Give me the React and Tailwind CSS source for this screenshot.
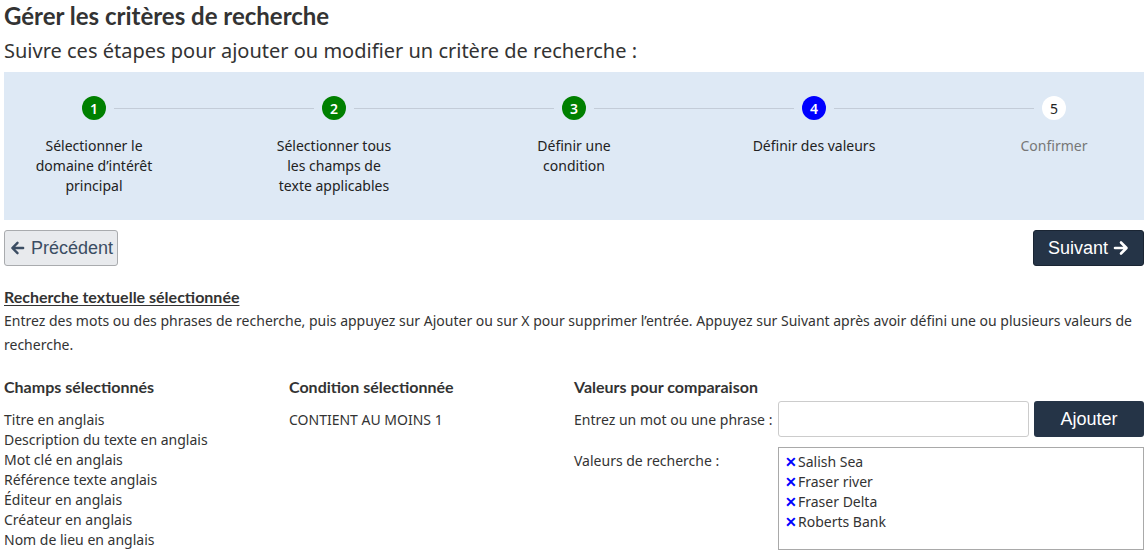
import React from 'react';

const steps = [
  { n: 1, label: 'Sélectionner le domaine d’intérêt principal', state: 'done' },
  { n: 2, label: 'Sélectionner tous les champs de texte applicables', state: 'done' },
  { n: 3, label: 'Définir une condition', state: 'done' },
  { n: 4, label: 'Définir des valeurs', state: 'current' },
  { n: 5, label: 'Confirmer', state: 'todo' },
];

const champs = [
  'Titre en anglais',
  'Description du texte en anglais',
  'Mot clé en anglais',
  'Référence texte anglais',
  'Éditeur en anglais',
  'Créateur en anglais',
  'Nom de lieu en anglais',
];

const valeurs = ['Salish Sea', 'Fraser river', 'Fraser Delta', 'Roberts Bank'];

const ArrowLeft = () => (
  <svg width="15" height="16" viewBox="0 0 16 16" className="shrink-0">
    <path d="M14 8H3M8 2.5L2.5 8L8 13.5" fill="none" stroke="currentColor" strokeWidth="2.6" strokeLinecap="round" strokeLinejoin="round" />
  </svg>
);

const ArrowRight = () => (
  <svg width="16" height="16" viewBox="0 0 16 16" className="shrink-0">
    <path d="M2 8h11M8 2.5L13.5 8L8 13.5" fill="none" stroke="currentColor" strokeWidth="2.6" strokeLinecap="round" strokeLinejoin="round" />
  </svg>
);

const Step = ({ step, first, last }) => {
  const circle =
    step.state === 'done'
      ? 'bg-[#008000] text-white font-semibold'
      : step.state === 'current'
      ? 'bg-[#0000ff] text-white font-semibold'
      : 'bg-white text-[#222]';
  return (
    <div className="w-[240px] shrink-0 flex flex-col items-center">
      <div className="flex items-center w-full h-[24px]">
        <div className={`flex-1 h-px mr-2 ${first ? '' : 'bg-[#c3ccd8]'}`} />
        <div className={`w-6 h-6 rounded-full flex items-center justify-center text-[14px] ${circle}`}>
          {step.n}
        </div>
        <div className={`flex-1 h-px ml-2 ${last ? '' : 'bg-[#c3ccd8]'}`} />
      </div>
      <div
        className={`w-[126px] mt-[16px] text-center text-[14px] leading-5 ${
          step.state === 'todo' ? 'text-[#777]' : 'text-[#222]'
        }`}
      >
        {step.label}
      </div>
    </div>
  );
};

export default function App() {
  return (
    <div className="w-[1148px] h-[555px] overflow-hidden bg-white px-1 text-[#333] font-['Noto_Sans',sans-serif]">
      <h1 className="font-['Lato',sans-serif] font-bold text-[24px] leading-[28px] pt-[2px] text-[#333]">
        Gérer les critères de recherche
      </h1>
      <p className="text-[20px] leading-6 mt-[9px] text-[#333]">
        Suivre ces étapes pour ajouter ou modifier un critère de recherche :
      </p>

      <div className="mt-[9px] h-[148px] bg-[#dee9f5] flex justify-center overflow-hidden pt-[24px]">
        {steps.map((s, i) => (
          <Step key={s.n} step={s} first={i === 0} last={i === steps.length - 1} />
        ))}
      </div>

      <div className="flex justify-between items-start mt-[10px] font-['Liberation_Sans',Arial,sans-serif]">
        <button className="h-[36px] pl-[5px] pr-[4px] flex items-center gap-[6px] bg-[#e8eaed] border border-[#a9abae] rounded-[3px] text-[18px] text-[#3b4d63]">
          <ArrowLeft />
          Précédent
        </button>
        <button className="h-[36px] px-[14px] flex items-center gap-[5px] bg-[#253447] border border-[#1a2533] rounded-[3px] text-[18px] text-white">
          Suivant
          <ArrowRight />
        </button>
      </div>

      <h2 className="mt-[21px] font-['Lato',sans-serif] font-bold text-[16px] leading-5 underline underline-offset-2 text-[#333]">
        Recherche textuelle sélectionnée
      </h2>
      <p className="text-[14px] leading-6 mt-[2px]">
        Entrez des mots ou des phrases de recherche, puis appuyez sur Ajouter ou sur X pour supprimer l’entrée. Appuyez sur Suivant après avoir défini une ou plusieurs valeurs de recherche.
      </p>

      <div className="grid grid-cols-[285px_285px_1fr] mt-[20px]">
        <div>
          <h3 className="font-['Lato',sans-serif] font-bold text-[16px] leading-5">Champs sélectionnés</h3>
          <ul className="mt-[13px] text-[14px] leading-5">
            {champs.map((c) => (
              <li key={c}>{c}</li>
            ))}
          </ul>
        </div>
        <div>
          <h3 className="font-['Lato',sans-serif] font-bold text-[16px] leading-5">Condition sélectionnée</h3>
          <div className="mt-[13px] text-[14px] leading-5">CONTIENT AU MOINS 1</div>
        </div>
        <div>
          <h3 className="font-['Lato',sans-serif] font-bold text-[16px] leading-5">Valeurs pour comparaison</h3>
          <div className="flex items-center mt-[4px]">
            <label className="w-[204px] text-[14px]">Entrez un mot ou une phrase :</label>
            <input className="w-[251px] h-[36px] border border-[#ccc] rounded-[3px] px-2 text-[14px]" />
            <button className="ml-[5px] w-[110px] h-[36px] bg-[#253447] rounded-[3px] text-white text-[18px] font-['Liberation_Sans',Arial,sans-serif]">
              Ajouter
            </button>
          </div>
          <div className="flex mt-[10px]">
            <div className="w-[204px] text-[14px] leading-5 pt-[4px]">Valeurs de recherche :</div>
            <div className="w-[366px] h-[103px] border border-[#a9a9a9] px-[6px] pt-[4px] text-[14px] leading-5">
              {valeurs.map((v) => (
                <div key={v} className="flex items-center">
                  <span className="text-[#0000ff] font-bold text-[14px] w-[13px]">✕</span>
                  {v}
                </div>
              ))}
            </div>
          </div>
        </div>
      </div>
    </div>
  );
}
